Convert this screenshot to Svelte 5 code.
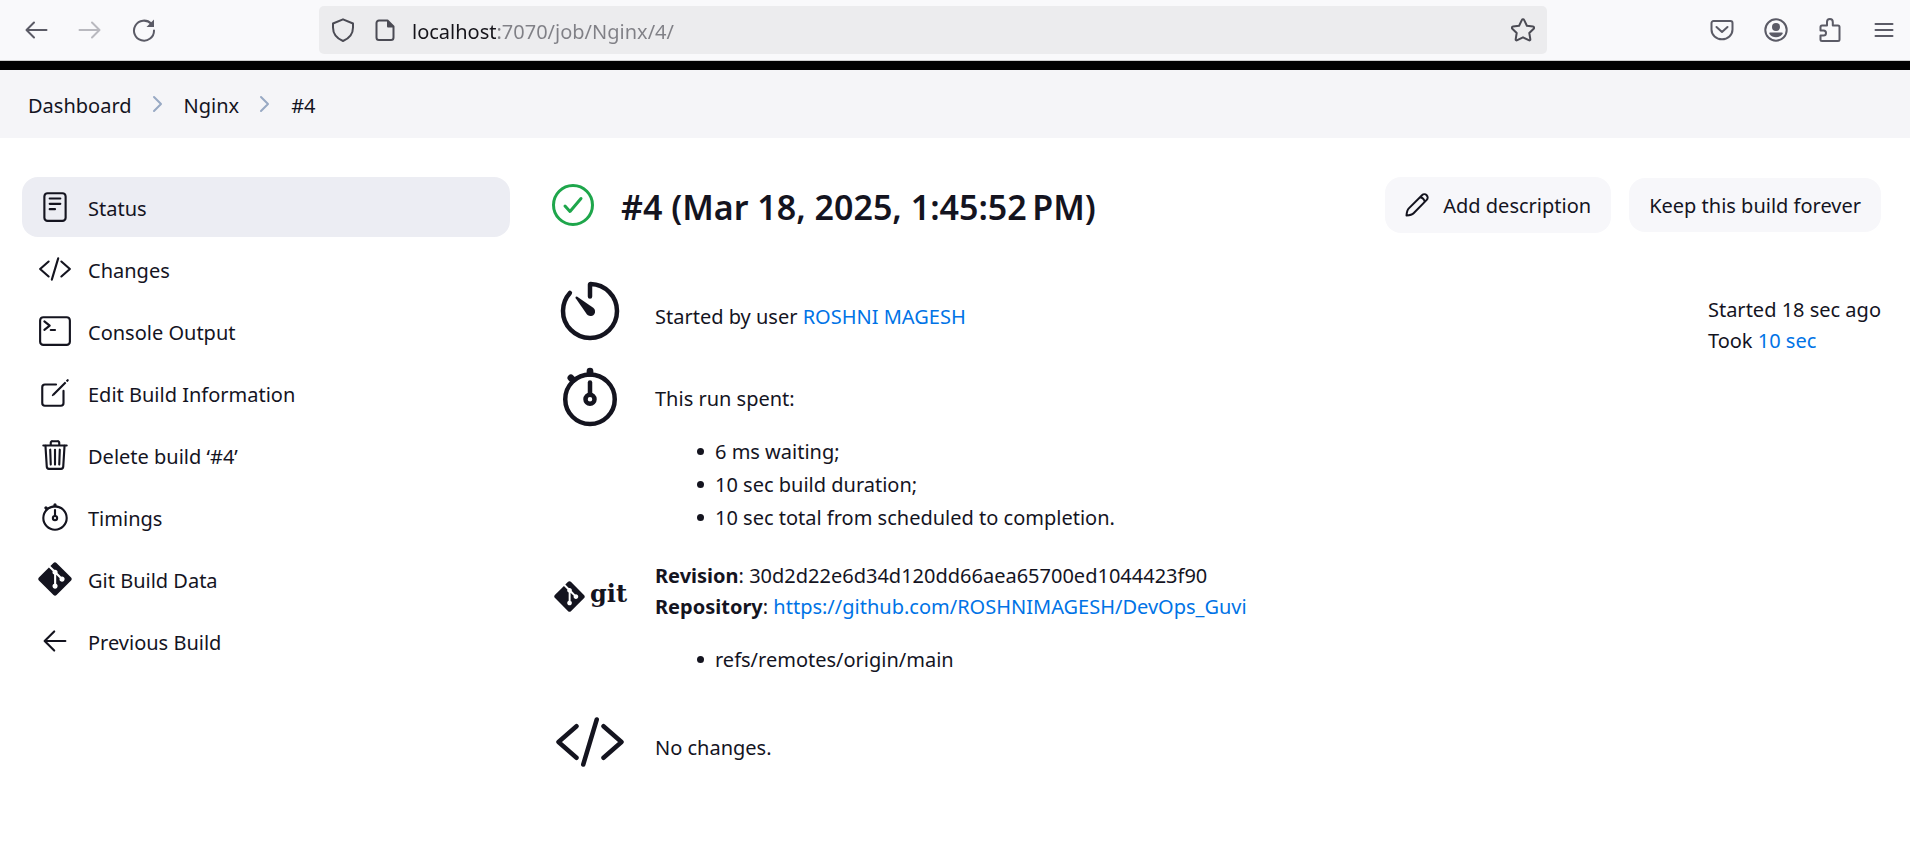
<script>
  const tasks = [
    { icon: 'reader', label: 'Status', active: true },
    { icon: 'code', label: 'Changes' },
    { icon: 'terminal', label: 'Console Output' },
    { icon: 'edit', label: 'Edit Build Information' },
    { icon: 'trash', label: 'Delete build ‘#4’' },
    { icon: 'stopwatch', label: 'Timings' },
    { icon: 'git', label: 'Git Build Data' },
    { icon: 'back', label: 'Previous Build' },
  ];
  let url = $state('localhost:7070/job/Nginx/4/');
</script>

{#snippet glyph(name)}
  <svg class="glyph" viewBox="0 0 512 512" aria-hidden="true">
    {#if name === 'reader'}
      <rect x="96" y="48" width="320" height="416" rx="48" />
      <path d="M176 128h160M176 208h160M176 288h80" />
    {:else if name === 'code'}
      <path d="M160 368L32 256l128-112M352 368l128-112-128-112M304 96l-96 320" />
    {:else if name === 'terminal'}
      <rect x="32" y="48" width="448" height="416" rx="48" />
      <path d="M96 112l80 64-80 64M192 240h64" />
    {:else if name === 'edit'}
      <path d="M384 224v184a40 40 0 01-40 40H104a40 40 0 01-40-40V168a40 40 0 0140-40h167.48" />
      <path class="solid" d="M459.94 53.25a16.06 16.06 0 00-23.22-.56L424.35 65a8 8 0 000 11.31l11.34 11.32a8 8 0 0011.34 0l12.06-12c6.1-6.09 6.67-16.01.85-22.38zM399.34 90L218.82 270.2a9 9 0 00-2.31 3.93L208.16 299a3.91 3.91 0 004.86 4.86l24.85-8.35a9 9 0 003.93-2.31L422 112.66a9 9 0 000-12.66l-9.95-10a9 9 0 00-12.71 0z" />
    {:else if name === 'trash'}
      <path d="M112 112l20 320c.95 18.49 14.4 32 32 32h184c17.67 0 30.87-13.51 32-32l20-320M80 112h352M192 112V72a23.93 23.93 0 0124-24h80a23.93 23.93 0 0124 24v40M256 176v224M184 176l8 224M328 176l-8 224" />
    {:else if name === 'stopwatch'}
      <path d="M256 232v-80" />
      <path class="thick" d="M256 88V72M132 132l-12-12" />
      <circle cx="256" cy="272" r="32" />
      <circle cx="256" cy="272" r="176" />
    {:else if name === 'timer'}
      <path d="M112.91 128A191.85 191.85 0 0064 254c-1.18 106.35 85.65 193.8 192 194 106.2.2 192-85.83 192-192 0-104.54-83.55-189.61-187.5-192a4.36 4.36 0 00-4.5 4.37V152" />
      <path class="solid" d="M233.38 278.63l-79-113a8.13 8.13 0 0111.32-11.32l113 79a32.5 32.5 0 01-37.25 53.26 33.21 33.21 0 01-8.07-7.94z" />
    {:else if name === 'back'}
      <path d="M244 400L100 256l144-144M120 256h292" />
    {:else if name === 'git'}
      <g transform="translate(4 4) scale(21)">
        <path class="solid" d="M23.546 10.93L13.067.452c-.604-.603-1.582-.603-2.188 0L8.708 2.627l2.76 2.76c.645-.215 1.379-.07 1.889.441.516.515.658 1.258.438 1.9l2.658 2.66c.645-.223 1.387-.078 1.9.435.721.72.721 1.884 0 2.604-.719.719-1.881.719-2.6 0-.539-.541-.674-1.337-.404-1.996L12.86 8.955v6.525c.176.086.342.203.488.348.713.721.713 1.883 0 2.6-.719.721-1.889.721-2.609 0-.719-.719-.719-1.879 0-2.598.182-.18.387-.316.605-.406V8.835c-.217-.091-.424-.222-.6-.401-.545-.545-.676-1.342-.396-2.009L7.636 3.7.45 10.881c-.6.605-.6 1.584 0 2.189l10.48 10.477c.604.604 1.582.604 2.186 0l10.43-10.43c.605-.603.605-1.582 0-2.187" />
      </g>
    {/if}
  </svg>
{/snippet}

{#snippet separator()}
  <svg class="separator" viewBox="0 0 12 18" aria-hidden="true"><path d="M2 2l7 7-7 7" /></svg>
{/snippet}

<div class="toolbar">
  <div class="nav">
    <button aria-label="Back">
      <svg viewBox="0 0 24 24"><path d="M10 4.500L2.500 12l7.500 7.500M3 12h19.500" /></svg>
    </button>
    <button aria-label="Forward" disabled>
      <svg viewBox="0 0 24 24"><path d="M14 4.500l7.500 7.500-7.500 7.500M21 12H1.500" /></svg>
    </button>
    <button aria-label="Reload">
      <svg viewBox="0 0 24 24"><path d="M19.300 5.800A10 10 0 1 0 22 12.500" /><path class="solid" d="M22 1.500v7.500h-7.500z" /></svg>
    </button>
  </div>
  <div class="urlbar">
    <svg viewBox="0 0 24 24" aria-hidden="true"><path d="M12 1.300L22 5.500v4c0 6-4 11-10 13.500C6 20.500 2 15.500 2 9.500v-4z" /></svg>
    <svg class="page" viewBox="0 0 24 24" aria-hidden="true"><path d="M14.500 2.500H6A2.500 2.500 0 0 0 3.500 5v14.500A2.500 2.500 0 0 0 6 22h12a2.500 2.500 0 0 0 2.500-2.500V8.500z" /><path class="solid" d="M14 2v6.500a1 1 0 0 0 1 1h6z" /></svg>
    <input aria-label="Address" type="text" bind:value={url} />
    <button aria-label="Bookmark this page">
      <svg viewBox="0 0 24 24"><path d="M12 1.200c.6 0 .9.300 1.200.900l2.700 5.600 6.100.9c1.200.2 1.500 1.300.7 2.100l-4.400 4.300 1 6.100c.2 1.100-.6 1.600-1.600 1.100L12 19.300l-5.700 2.900c-1 .5-1.800 0-1.600-1.100l1-6.100-4.400-4.300c-.8-.8-.5-1.900.7-2.100l6.100-.9 2.700-5.600c.3-.6.6-.9 1.200-.9z" /></svg>
    </button>
  </div>
  <div class="tools">
    <button aria-label="Save to Pocket">
      <svg viewBox="0 0 24 24"><path d="M3.500 3h17a2 2 0 0 1 2 2v6.500a10.500 9.800 0 0 1-21 0V5a2 2 0 0 1 2-2zM6.500 9l5.500 5 5.500-5" /></svg>
    </button>
    <button aria-label="Account">
      <svg viewBox="0 0 24 24"><circle cx="12" cy="12" r="10.700" /><circle class="solid" cx="12" cy="9" r="4" /><path class="solid" d="M6 14.500h12c.8 0 1 .8.500 1.400C17 18 14.700 19.200 12 19.200S7 18 5.500 15.900c-.5-.6-.3-1.400.5-1.400z" /></svg>
    </button>
    <button aria-label="Extensions">
      <svg viewBox="0 0 24 24"><path d="M2.500 12.500V9A1.500 1.500 0 0 1 4 7.500h5V4a2.900 2.900 0 0 1 5.800 0v3.500H20A1.500 1.500 0 0 1 21.500 9v12.500A1.500 1.500 0 0 1 20 23H4a1.500 1.500 0 0 1-1.500-1.500v-4h3a2.500 2.500 0 0 0 0-5z" /></svg>
    </button>
    <button aria-label="Menu">
      <svg viewBox="0 0 24 24"><path d="M3.500 6h17M3.500 12h17M3.500 18h17" /></svg>
    </button>
  </div>
</div>

<nav class="breadcrumbs" aria-label="Breadcrumb">
  <a href="#dashboard">Dashboard</a>
  {@render separator()}
  <a href="#nginx">Nginx</a>
  {@render separator()}
  <a href="#build">#4</a>
</nav>

<div class="page-body">
  <aside>
    {#each tasks as task}
      <a class="task" class:active={task.active} href="#task">
        {@render glyph(task.icon)}
        <span>{task.label}</span>
      </a>
    {/each}
  </aside>

  <main>
    <header>
      <svg class="result" viewBox="0 0 44 44" role="img" aria-label="Success">
        <circle cx="22" cy="22" r="19.500" /><path d="M14 23l5 5.500L30 15.500" />
      </svg>
      <h1>#4 (Mar 18, 2025, 1:45:52&#8239;PM)</h1>
      <button class="action with-icon">
        <svg viewBox="0 0 24 24" aria-hidden="true"><path d="M1.500 22.500c.2-2.800.8-5.600 2.300-7.100L17 2.200a3.300 3.300 0 0 1 4.700 4.700L8.600 20.200c-1.500 1.500-4.300 2.100-7.100 2.300zM15 4.200c2.600.4 4.300 2.100 4.700 4.700" /></svg>
        Add description
      </button>
      <button class="action">Keep this build forever</button>
    </header>

    <div class="content">
      <div class="rows">
        <section>
          {@render glyph('timer')}
          <div class="text">Started by user <a href="#user">ROSHNI MAGESH</a></div>
        </section>
        <section class="timing">
          {@render glyph('stopwatch')}
          <div class="text">
            This run spent:
            <ul>
              <li>6 ms waiting;</li>
              <li>10 sec build duration;</li>
              <li>10 sec total from scheduled to completion.</li>
            </ul>
          </div>
        </section>
        <section class="revision">
          <div class="git-logo">
            {@render glyph('git')}
            <span>git</span>
          </div>
          <div class="text">
            <b>Revision</b>: 30d2d22e6d34d120dd66aea65700ed1044423f90<br />
            <b>Repository</b>: <a href="#repository">https://github.com/ROSHNIMAGESH/DevOps_Guvi</a>
            <ul>
              <li>refs/remotes/origin/main</li>
            </ul>
          </div>
        </section>
        <section>
          {@render glyph('code')}
          <div class="text">No changes.</div>
        </section>
      </div>
      <div class="times">
        Started 18 sec ago<br />
        Took <a href="#trend">10 sec</a>
      </div>
    </div>
  </main>
</div>

<style>
  :global(body) {
    margin: 0;
    background: #fff;
    color: #14141f;
    font: 20px/31px 'Noto Sans', 'Open Sans', sans-serif;
  }
  a {
    color: #0073e6;
    text-decoration: none;
  }
  button {
    border: 0;
    padding: 0;
    background: none;
    color: inherit;
    font: inherit;
  }
  svg {
    display: block;
    flex: none;
    fill: none;
    stroke: currentColor;
    stroke-linecap: round;
    stroke-linejoin: round;
  }
  .solid {
    fill: currentColor;
    stroke: none;
  }

  .toolbar {
    display: flex;
    align-items: center;
    height: 60px;
    border-bottom: 1px solid #ccc;
    background: #f9f9fb;
    color: #5b5b66;
  }
  .toolbar svg {
    width: 24px;
    height: 24px;
    stroke-width: 2;
  }
  .nav,
  .tools {
    display: flex;
    gap: 30px;
  }
  .nav {
    width: 295px;
    padding-left: 24px;
  }
  .nav button:disabled {
    opacity: 0.4;
  }
  .urlbar {
    display: flex;
    flex: 1;
    align-items: center;
    box-sizing: border-box;
    height: 48px;
    padding: 0 12px;
    border-radius: 5px;
    background: #ececee;
    color: #4b4b54;
  }
  .urlbar .page {
    margin: 0 15px 0 18px;
  }
  input {
    flex: 1;
    min-width: 0;
    border: 0;
    padding: 2px 0 0;
    outline: 0;
    font: 20px/31px 'Noto Sans', 'Open Sans', sans-serif;
    color: transparent;
    background: linear-gradient(90deg, #15141a 86px, #808086 86px);
    background-clip: text;
    caret-color: #15141a;
  }
  .tools {
    margin-left: 163px;
    padding-right: 14px;
  }

  .breadcrumbs {
    display: flex;
    align-items: center;
    gap: 20px;
    height: 68px;
    padding: 0 28px;
    border-top: 9px solid #000;
    background: #f5f5f8;
  }
  .breadcrumbs a {
    padding-top: 2px;
    color: #14141f;
  }
  .separator {
    width: 12px;
    height: 18px;
    color: #98a9c4;
    stroke-width: 2;
  }

  .page-body {
    display: grid;
    grid-template-columns: 488px 1fr;
    gap: 41px;
    padding: 39px 29px 60px 22px;
  }
  .glyph {
    width: 34px;
    height: 34px;
    stroke-width: 32;
  }
  .thick {
    stroke-width: 48;
  }
  aside {
    display: flex;
    flex-direction: column;
    gap: 2px;
  }
  .task {
    display: flex;
    align-items: center;
    gap: 16px;
    height: 60px;
    padding-left: 16px;
    border-radius: 16px;
    color: #14141f;
  }
  .task span {
    padding-top: 2px;
  }
  .task.active {
    background: #ecedf3;
  }

  header {
    display: flex;
    align-items: center;
    height: 56px;
    gap: 18px;
  }
  .result {
    width: 44px;
    height: 44px;
    color: #1ea64b;
    stroke-width: 3;
  }
  h1 {
    flex: 1;
    margin: 0 0 0 8px;
    padding-top: 4px;
    font-size: 34px;
    font-weight: 600;
    line-height: 48px;
  }
  .action {
    display: flex;
    align-items: center;
    gap: 14px;
    height: 54px;
    padding: 0 20px;
    border-radius: 16px;
    background: #f7f7fa;
  }
  .action.with-icon {
    height: 56px;
  }
  .action svg {
    width: 24px;
    height: 24px;
    stroke-width: 2;
  }

  .content {
    display: flex;
    justify-content: space-between;
    padding-top: 42px;
  }
  .rows {
    display: flex;
    flex-direction: column;
    gap: 14px;
  }
  section {
    display: flex;
    align-items: flex-start;
    gap: 29px;
    padding-left: 3px;
  }
  section > .glyph,
  .git-logo {
    width: 72px;
    height: 72px;
  }
  .text {
    padding-top: 26px;
  }
  .timing .text {
    padding-top: 22px;
  }
  .revision .text {
    padding-top: 0;
  }
  .git-logo {
    display: flex;
    align-items: center;
    gap: 5px;
    font: bold 24px/28px 'DejaVu Serif', serif;
  }
  .git-logo .glyph {
    width: 31px;
    height: 31px;
  }
  .git-logo span {
    padding-bottom: 4px;
  }
  ul {
    margin: 21px 0 12px;
    padding-left: 42px;
    line-height: 33px;
    list-style: none;
  }
  li {
    display: flex;
    align-items: center;
    gap: 11px;
  }
  li::before {
    content: '';
    width: 7px;
    height: 7px;
    border-radius: 50%;
    background: currentColor;
  }
  .revision ul {
    margin-bottom: 16px;
  }
  .times {
    padding-top: 19px;
  }
</style>
